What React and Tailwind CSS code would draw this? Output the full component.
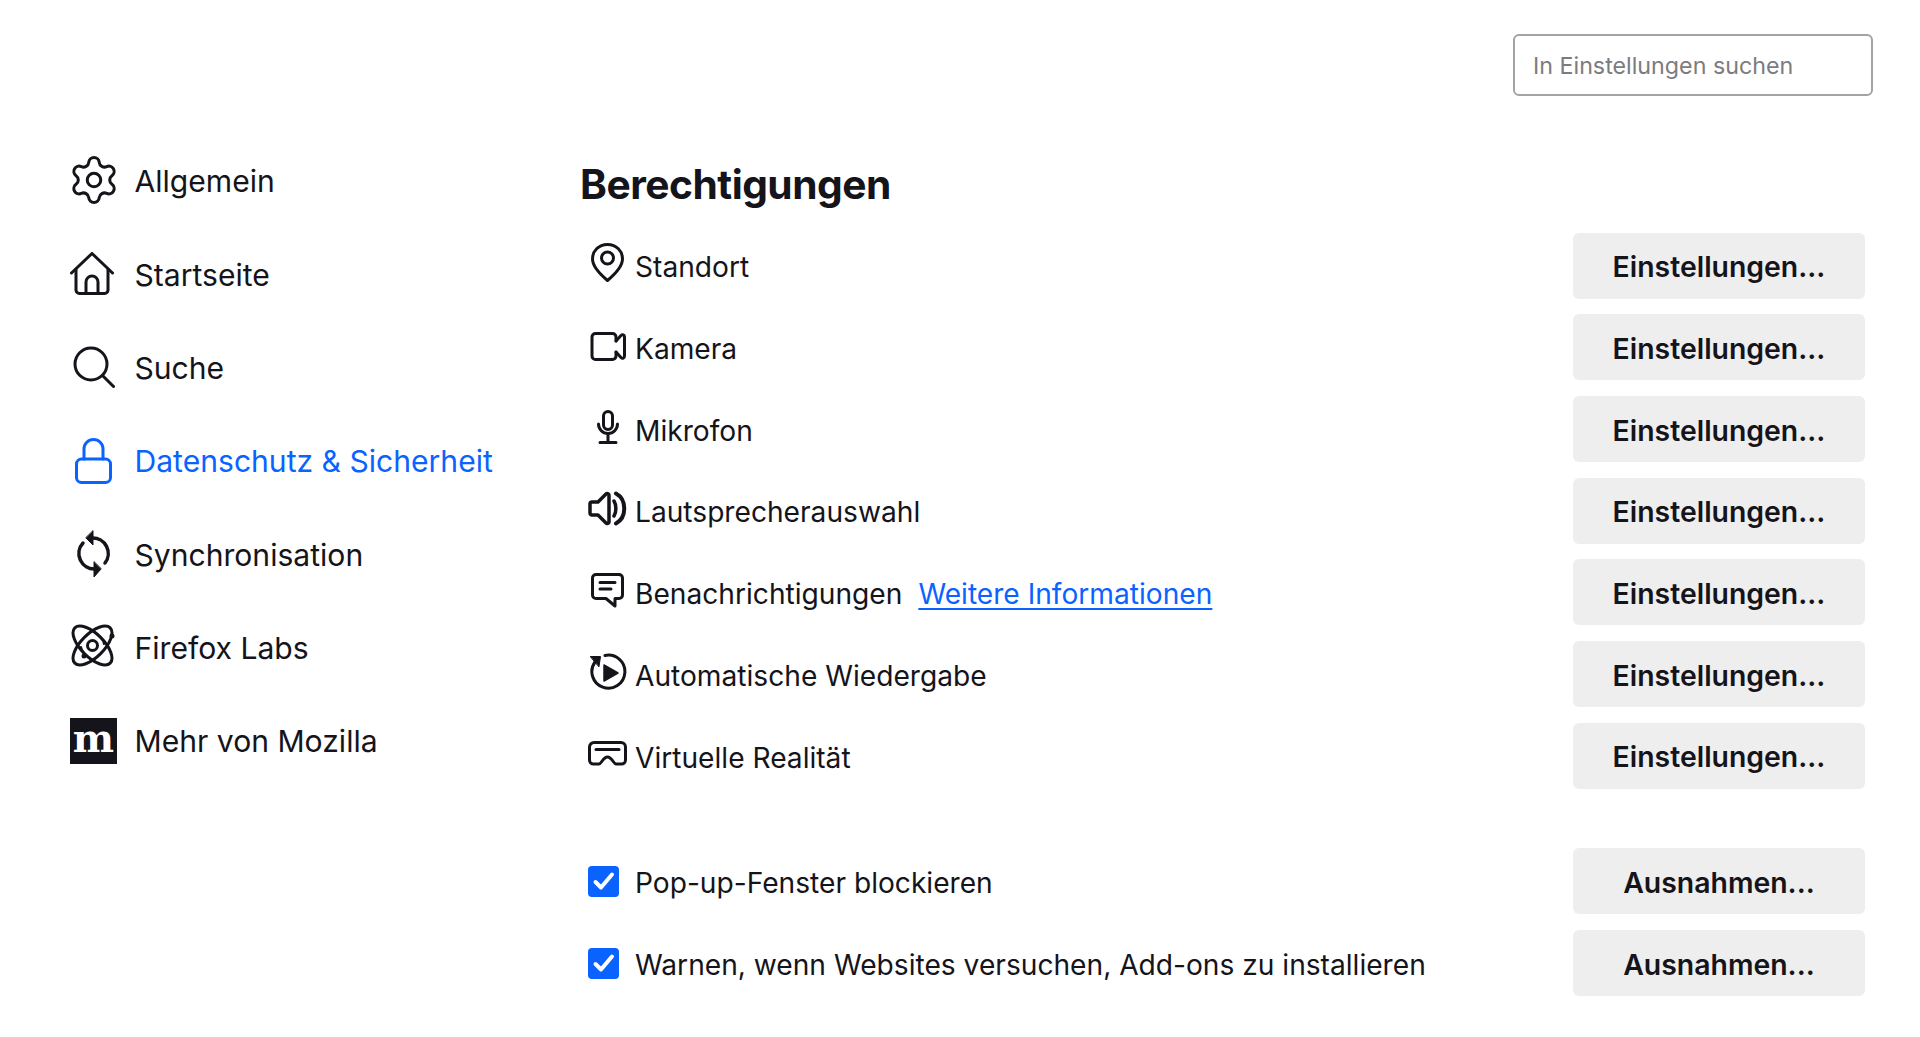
import { Settings } from "lucide-react";

function Glyph({ w, h, className = "", children }) {
  return (
    <svg
      width={w}
      height={h}
      viewBox={`0 0 ${w} ${h}`}
      fill="none"
      stroke="currentColor"
      strokeWidth="3"
      strokeLinecap="round"
      strokeLinejoin="round"
      className={`shrink-0 ${className}`}
    >
      {children}
    </svg>
  );
}

const HomeIcon = () => (
  <Glyph w={44} h={44}>
    <path d="M1.500 21 22 1.500 42.500 21" />
    <path d="M6 17v21a3.500 3.500 0 0 0 3.500 3.500h25A3.500 3.500 0 0 0 38 38V17" />
    <path d="M16 41V30a6 6 0 0 1 12 0v11" />
  </Glyph>
);

const SearchIcon = () => (
  <Glyph w={42} h={42}>
    <circle cx="18" cy="18" r="16" />
    <path d="m30 30 10.500 10.500" />
  </Glyph>
);

const LockIcon = () => (
  <Glyph w={37} h={46}>
    <rect x="1.500" y="21" width="34" height="23.500" rx="5" />
    <path d="M9 21V11a9.500 9.500 0 0 1 19 0v10" />
  </Glyph>
);

const SyncIcon = () => (
  <Glyph w={35} h={47}>
    <path d="M16 8a15.500 15.500 0 0 1 13 25" strokeWidth="3.500" />
    <path d="M19 39A15.500 15.500 0 0 1 7 13" strokeWidth="3.500" />
    <path d="M17 1v14l-7-7z" fill="currentColor" strokeWidth="1" />
    <path d="M18 32v15l7-8z" fill="currentColor" strokeWidth="1" />
  </Glyph>
);

const LabsIcon = () => (
  <Glyph w={45} h={45}>
    <ellipse cx="22.500" cy="22.500" rx="25" ry="11.500" transform="rotate(45 22.500 22.500)" />
    <ellipse cx="22.500" cy="22.500" rx="25" ry="11.500" transform="rotate(-45 22.500 22.500)" />
    <circle cx="22.500" cy="22.500" r="5" />
    <path d="M11 24a11.500 11.500 0 0 0 4 7M34 21a11.500 11.500 0 0 0-4-7" strokeWidth="2" />
    <circle cx="42" cy="13" r="2.500" fill="currentColor" stroke="none" />
    <circle cx="14" cy="33" r="2.500" fill="currentColor" stroke="none" />
  </Glyph>
);

const PinIcon = () => (
  <Glyph w={33} h={39}>
    <path d="M16.500 1.500C7.500 1.500 1.500 8 1.500 16c0 8 8.500 16 15 21.500C23 32 31.500 24 31.500 16c0-8-6-14.500-15-14.500Z" />
    <circle cx="16.500" cy="15" r="6" />
  </Glyph>
);

const CameraIcon = () => (
  <Glyph w={36} h={29}>
    <path d="M26 20v4a3.500 3.500 0 0 1-3.500 3.500h-17A3.500 3.500 0 0 1 2 24V5a3.500 3.500 0 0 1 3.500-3.500h17A3.500 3.500 0 0 1 26 5v4" />
    <path d="m26 9 5-5.500c1.500-1.500 3.500-.5 3.500 1.500v19c0 2-2 3-3.500 1.500L26 20" />
  </Glyph>
);

const MicIcon = () => (
  <Glyph w={22} h={34}>
    <rect x="6.500" y="1.500" width="9" height="18" rx="4.500" />
    <path d="M1.500 14a9.500 9.500 0 0 0 19 0" />
    <path d="M11 24v8.500M3 32.500h16" />
  </Glyph>
);

const SpeakerIcon = () => (
  <Glyph w={39} h={35}>
    <path d="M2 13a2 2 0 0 1 2-2h6l8-8c1-1 3-.5 3 1v27c0 1.500-2 2-3 1l-8-8H4a2 2 0 0 1-2-2z" strokeWidth="3.500" />
    <path d="M26 10c2.500 4 2.500 11 0 15" strokeWidth="3.500" />
    <path d="M28 2.500c11 6 11 24 0 30" strokeWidth="4" />
  </Glyph>
);

const BubbleIcon = () => (
  <Glyph w={33} h={35}>
    <path d="M5 1.500h23A3.500 3.500 0 0 1 31.500 5v17a3.500 3.500 0 0 1-3.500 3.500h-4V33l-9-7.500H5A3.500 3.500 0 0 1 1.500 22V5A3.500 3.500 0 0 1 5 1.500Z" />
    <path d="M9 9.500h15M9 16h11" />
  </Glyph>
);

const AutoplayIcon = () => (
  <Glyph w={37} h={37}>
    <path d="M15 2.500A16.500 16.500 0 1 1 5 9" />
    <path d="M0.500 3.500h10l-1.500 10z" fill="currentColor" strokeWidth="1" />
    <path d="M14 12v16l14-8z" fill="currentColor" strokeWidth="1.500" />
  </Glyph>
);

const HeadsetIcon = () => (
  <Glyph w={39} h={25}>
    <path d="M6 1.500h27A4.500 4.500 0 0 1 37.500 6v13a4 4 0 0 1-4 4H28c-2.500 0-4-7-8.500-7s-6 7-8.500 7H5.500a4 4 0 0 1-4-4V6A4.500 4.500 0 0 1 6 1.500Z" />
    <path d="M8 8.500h23" />
  </Glyph>
);

const navItems = [
  { label: "Allgemein", icon: <Settings size={54} strokeWidth={1.35} className="shrink-0" />, shift: "-translate-y-[1px]" },
  { label: "Startseite", icon: <HomeIcon />, shift: "-translate-x-[2px]" },
  { label: "Suche", icon: <SearchIcon />, shift: "" },
  { label: "Datenschutz & Sicherheit", icon: <LockIcon />, active: true, shift: "" },
  { label: "Synchronisation", icon: <SyncIcon />, shift: "-translate-y-[1px]" },
  { label: "Firefox Labs", icon: <LabsIcon />, shift: "-translate-x-[1px] -translate-y-[2px]" },
  {
    label: "Mehr von Mozilla",
    shift: "",
    icon: (
      <span className="flex h-[46px] w-[47px] items-center justify-center bg-[#15141a] pb-[5px] font-['DejaVu_Serif'] text-[39px] leading-none font-bold text-white">
        m
      </span>
    ),
  },
];

const permissions = [
  { label: "Standort", icon: <PinIcon />, shift: "-translate-x-[1px] -translate-y-[3px]" },
  { label: "Kamera", icon: <CameraIcon />, shift: "-translate-y-[1px]" },
  { label: "Mikrofon", icon: <MicIcon />, shift: "-translate-y-[2px]" },
  { label: "Lautsprecherauswahl", icon: <SpeakerIcon />, shift: "-translate-x-[1px] -translate-y-[2px]" },
  { label: "Benachrichtigungen", icon: <BubbleIcon />, link: "Weitere Informationen", shift: "-translate-x-[1px] -translate-y-[2px]" },
  { label: "Automatische Wiedergabe", icon: <AutoplayIcon />, shift: "-translate-y-[2px]" },
  { label: "Virtuelle Realität", icon: <HeadsetIcon />, shift: "-translate-x-[1px] -translate-y-[2px]" },
];

const blocks = ["Pop-up-Fenster blockieren", "Warnen, wenn Websites versuchen, Add-ons zu installieren"];

function ActionButton({ children }) {
  return (
    <button className="h-[66px] w-[292px] shrink-0 rounded-[6px] bg-[#eeeeef] pt-[4px] text-[28.400px] font-semibold text-[#15141a]">
      {children}
    </button>
  );
}

function Checkbox() {
  return (
    <span className="flex h-[31px] w-[31px] items-center justify-center rounded-[4px] bg-[#0a62ff]">
      <svg width="23" height="23" viewBox="0 0 23 23" fill="none" stroke="white" strokeWidth="4" strokeLinecap="round" strokeLinejoin="round">
        <path d="m3.500 12 5.500 5.500L20 4.500" />
      </svg>
    </span>
  );
}

export default function App() {
  return (
    <div className="h-[1037px] overflow-hidden bg-white font-['Inter',sans-serif] text-[#15141a]">
      <div className="flex justify-end pt-[34px] pr-[47px]">
        <div className="flex h-[62px] w-[360px] items-center rounded-[6px] border-2 border-[#a3a3a5] pt-[2px] pl-[18px] text-[23.250px] text-[#7c7c80]">
          In Einstellungen suchen
        </div>
      </div>

      <div className="mt-[38px] flex">
        <nav className="flex w-[581px] shrink-0 flex-col pl-[70px]">
          {navItems.map((item) => (
            <div
              key={item.label}
              className={`flex h-[93.400px] items-center text-[30.100px] ${item.active ? "text-[#0a62ff]" : ""}`}
            >
              <span className={`flex w-[47px] justify-center ${item.shift}`}>{item.icon}</span>
              <span className="ml-[17.500px] pt-[2px]">{item.label}</span>
            </div>
          ))}
        </nav>

        <main className="flex-1 pt-[21px] pr-[55px]">
          <h1 className="-ml-[1px] h-[60px] text-[40.700px] leading-[60px] font-bold tracking-[-0.5px]">Berechtigungen</h1>
          <div className="mt-[17.500px] flex flex-col gap-[15.700px]">
            {permissions.map((row) => (
              <div key={row.label} className="flex items-center justify-between">
                <div className="flex items-center">
                  <span className={`ml-[7px] flex w-[40px] justify-center ${row.shift}`}>{row.icon}</span>
                  <span className="ml-[7px] pt-[4px] text-[28.150px]">{row.label}</span>
                  {row.link && (
                    <a className="ml-[16px] pt-[4px] text-[28.150px] text-[#0a62ff] underline underline-offset-4">{row.link}</a>
                  )}
                </div>
                <ActionButton>Einstellungen...</ActionButton>
              </div>
            ))}
          </div>

          <div className="mt-[59.500px] flex flex-col gap-[16px]">
            {blocks.map((label) => (
              <div key={label} className="flex items-center justify-between">
                <div className="flex items-center">
                  <span className="ml-[7px] flex w-[40px]">
                    <Checkbox />
                  </span>
                  <span className="ml-[7px] pt-[4px] text-[28.150px]">{label}</span>
                </div>
                <ActionButton>Ausnahmen...</ActionButton>
              </div>
            ))}
          </div>
        </main>
      </div>
    </div>
  );
}
